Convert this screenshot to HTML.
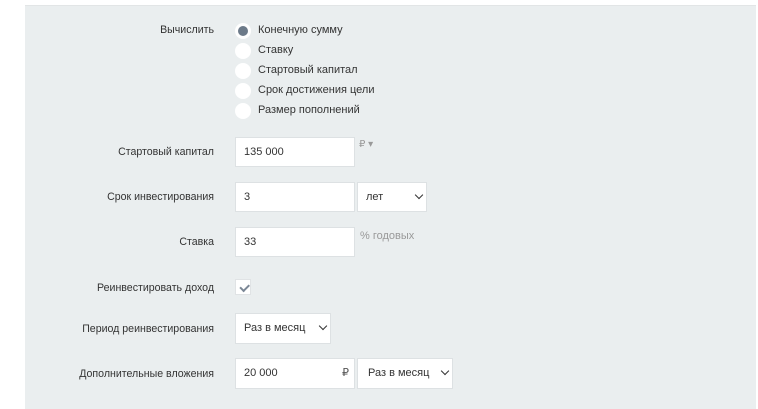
<!DOCTYPE html>
<html><head><meta charset="utf-8"><style>
body{margin:0;width:758px;height:408px;background:#fff;font-family:"Liberation Sans","DejaVu Sans",sans-serif;font-size:11px;color:#333;position:relative;overflow:hidden}
.panel{position:absolute;left:25px;top:5px;width:731px;height:403px;background:#eaeeef;border-top:1px solid #e2e5e6}
.a{position:absolute}
.lbl{position:absolute;right:544px;text-align:right;white-space:nowrap;font-size:10.6px}
.r{position:absolute;left:235px;width:16px;height:16px;border-radius:50%;background:#fff}
.rt{position:absolute;left:258px}
.in{position:absolute;background:#fff;border:1px solid #dde1e3;box-sizing:border-box;padding-left:8px;line-height:28px}
.chev{position:absolute;width:5px;height:5px;border-right:1.5px solid #333;border-bottom:1.5px solid #333;transform:rotate(45deg)}
.g{color:#999}
</style></head><body>
<div class="panel"></div>
<div class="lbl" style="top:24px">Вычислить</div>
<div class="r" style="top:23px"><div style="position:absolute;left:3px;top:3px;width:10px;height:10px;border-radius:50%;background:#6c7a89"></div></div>
<div class="rt" style="top:24px">Конечную сумму</div>
<div class="r" style="top:43px"></div><div class="rt" style="top:44px">Ставку</div>
<div class="r" style="top:63px"></div><div class="rt" style="top:64px">Стартовый капитал</div>
<div class="r" style="top:83px"></div><div class="rt" style="top:84px">Срок достижения цели</div>
<div class="r" style="top:103px"></div><div class="rt" style="top:104px">Размер пополнений</div>

<div class="lbl" style="top:146px">Стартовый капитал</div>
<div class="in" style="left:235px;top:137px;width:120px;height:30px">135 000</div>
<div class="a g" style="left:359px;top:139px;font-size:10px">₽ ▾</div>

<div class="lbl" style="top:191px">Срок инвестирования</div>
<div class="in" style="left:235px;top:182px;width:120px;height:30px">3</div>
<div class="in" style="left:357px;top:182px;width:70px;height:30px">лет</div>
<div class="chev" style="left:416px;top:192px"></div>

<div class="lbl" style="top:236px">Ставка</div>
<div class="in" style="left:235px;top:227px;width:120px;height:30px">33</div>
<div class="a g" style="left:360px;top:230px">% годовых</div>

<div class="lbl" style="top:282px">Реинвестировать доход</div>
<div class="a" style="left:235px;top:279px;width:16px;height:16px;background:#fff;border:1px solid #e0e3e5;box-sizing:border-box"></div>
<div class="a" style="left:240px;top:284px;width:7px;height:3.5px;border-left:2px solid #7b8796;border-bottom:2px solid #7b8796;transform:rotate(-45deg)"></div>

<div class="lbl" style="top:323px">Период реинвестирования</div>
<div class="in" style="left:235px;top:313px;width:96px;height:31px">Раз в месяц</div>
<div class="chev" style="left:320px;top:323px"></div>

<div class="lbl" style="top:368px">Дополнительные вложения</div>
<div class="in" style="left:235px;top:358px;width:120px;height:31px">20 000</div>
<div class="a" style="left:342px;top:366px;color:#555">₽</div>
<div class="in" style="left:357px;top:358px;width:96px;height:31px;padding-left:10px">Раз в месяц</div>
<div class="chev" style="left:442px;top:368px"></div>
</body></html>
